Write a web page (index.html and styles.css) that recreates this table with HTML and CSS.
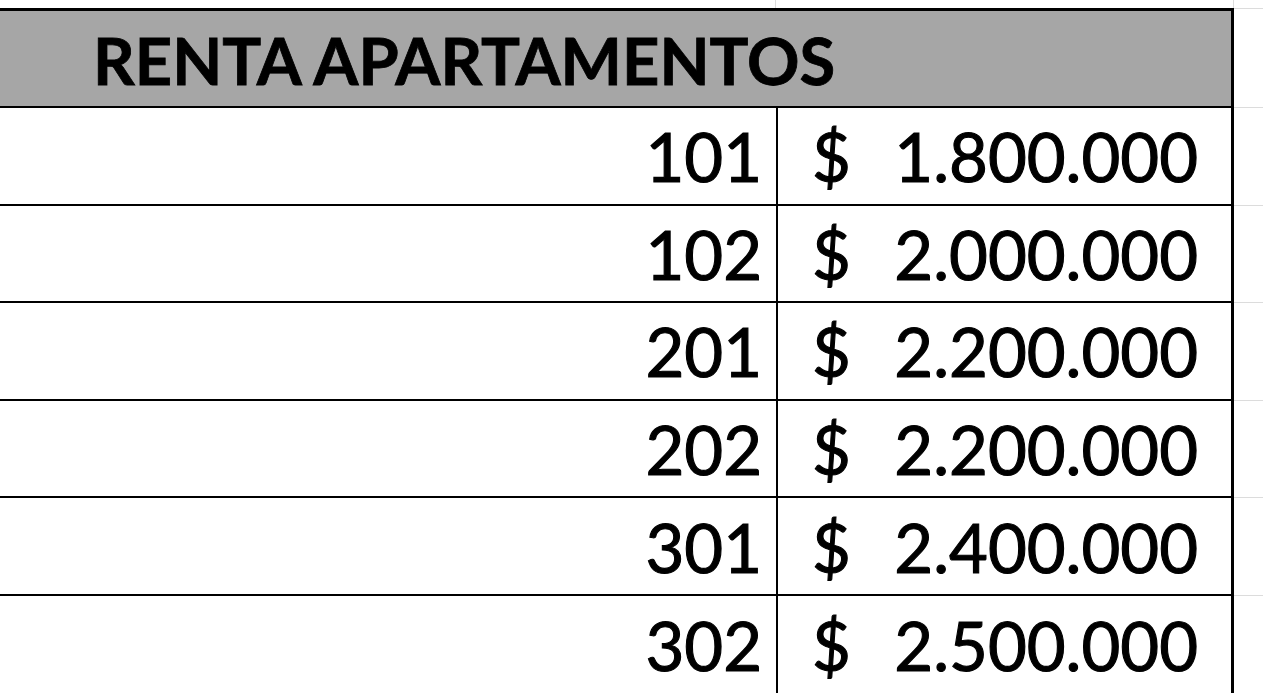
FILE: index.html
```html
<!DOCTYPE html>
<html lang="es">
<head>
<meta charset="utf-8">
<title>Renta apartamentos</title>
<link rel="stylesheet" href="styles.css">
</head>
<body>
<div class="sheet">
  <div class="top-strip">
    <div class="strip-cell strip-a"></div>
    <div class="strip-cell strip-b"></div>
    <div class="strip-cell strip-c"></div>
  </div>
  <div class="row title-row">
    <div class="title">RENTA APARTAMENTOS</div>
    <div class="spare"></div>
  </div>
  <div class="row">
    <div class="num">101</div>
    <div class="amt"><span class="cur">$</span><span class="val">1.800.000</span></div>
    <div class="spare"></div>
  </div>
  <div class="row">
    <div class="num">102</div>
    <div class="amt"><span class="cur">$</span><span class="val">2.000.000</span></div>
    <div class="spare"></div>
  </div>
  <div class="row">
    <div class="num">201</div>
    <div class="amt"><span class="cur">$</span><span class="val">2.200.000</span></div>
    <div class="spare"></div>
  </div>
  <div class="row">
    <div class="num">202</div>
    <div class="amt"><span class="cur">$</span><span class="val">2.200.000</span></div>
    <div class="spare"></div>
  </div>
  <div class="row">
    <div class="num">301</div>
    <div class="amt"><span class="cur">$</span><span class="val">2.400.000</span></div>
    <div class="spare"></div>
  </div>
  <div class="row last-row">
    <div class="num">302</div>
    <div class="amt"><span class="cur">$</span><span class="val">2.500.000</span></div>
    <div class="spare"></div>
  </div>
</div>
</body>
</html>
```

FILE: styles.css
```css
html, body {
  margin: 0;
  padding: 0;
  background: #ffffff;
  overflow: hidden;
}

.sheet {
  width: 1263px;
  height: 693px;
  overflow: hidden;
  font-family: Lato, "Open Sans", "Liberation Sans", sans-serif;
  color: #000000;
}

.top-strip {
  display: grid;
  grid-template-columns: 776px 458px 1fr;
  height: 8px;
}

.strip-cell {
  box-sizing: border-box;
  height: 8px;
}

.strip-a {
  border-right: 1px solid #dcdcdc;
}

.strip-b {
  border-right: 1px solid #dcdcdc;
}

.row {
  display: grid;
  grid-template-columns: 776px 458px 1fr;
  height: 97.6px;
}

.title-row {
  height: 100px;
}

.title {
  grid-column: 1 / span 2;
  box-sizing: border-box;
  background: #a6a6a6;
  border-top: 3px solid #000;
  border-bottom: 2px solid #000;
  border-right: 3px solid #000;
  display: flex;
  align-items: center;
  padding-left: 93px;
  padding-top: 4px;
  font-weight: 700;
  font-size: 65px;
  line-height: 1;
  -webkit-text-stroke: 0.8px #000;
}

.spare {
  box-sizing: border-box;
  border-bottom: 1px solid #dcdcdc;
}

.title-row .spare {
  border-top: 1px solid #dcdcdc;
}

.num {
  box-sizing: border-box;
  border-bottom: 2px solid #000;
  display: flex;
  align-items: center;
  justify-content: flex-end;
  padding-right: 14px;
  padding-top: 2px;
  font-size: 67px;
  line-height: 1;
  -webkit-text-stroke: 1.1px #000;
}

.amt {
  box-sizing: border-box;
  border-left: 2px solid #000;
  border-right: 3px solid #000;
  border-bottom: 2px solid #000;
  display: flex;
  align-items: center;
  justify-content: space-between;
  padding-left: 34px;
  padding-right: 33px;
  padding-top: 2px;
  font-size: 67px;
  line-height: 1;
  -webkit-text-stroke: 1.1px #000;
}

.last-row .num,
.last-row .amt {
  border-bottom: none;
}
```
